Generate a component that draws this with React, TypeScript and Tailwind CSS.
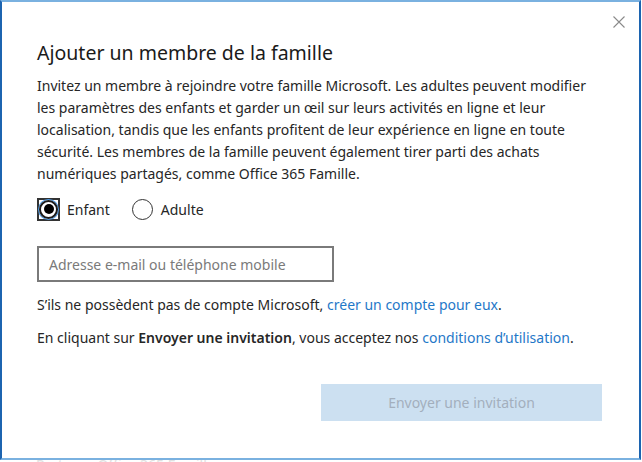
export default function App() {
  return (
    <div
      className="w-[642px] h-[462px] bg-white overflow-hidden relative"
      style={{ fontFamily: '"Noto Sans", "Open Sans", sans-serif' }}
    >
      <div className="w-[641px] h-[460px] border-t-2 border-b-2 border-l-2 border-r-2 border-t-[#7ab1e0] border-b-[#7ab1e0] border-l-[#1c64b0] border-r-[#1c64b0] relative flex flex-col">
        {/* Close */}
        <button className="absolute right-[13px] top-[13px] w-[14px] h-[14px] text-[#8a8a8a]">
          <svg viewBox="0 0 14 14" width="14" height="14" fill="none" stroke="currentColor" strokeWidth="1.1">
            <path d="M1.5 1.5L12.5 12.5M12.5 1.5L1.5 12.5" />
          </svg>
        </button>

        <div className="pl-[35px] pr-[30px] pt-[37px] flex flex-col">
          <h1 className="text-[19.5px] leading-[28px] text-[#1a1a1a] font-normal">
            Ajouter un membre de la famille
          </h1>
          <p className="mt-[8px] text-[14px] leading-[22px] text-[#262626] w-[570px]">
            Invitez un membre à rejoindre votre famille Microsoft. Les adultes peuvent modifier les paramètres des
            enfants et garder un œil sur leurs activités en ligne et leur localisation, tandis que les enfants profitent
            de leur expérience en ligne en toute sécurité. Les membres de la famille peuvent également tirer parti des
            achats numériques partagés, comme Office 365 Famille.
          </p>

          {/* Radios */}
          <div className="mt-[12px] flex items-center h-[24px] text-[14px] text-[#262626]">
            <label className="flex items-center">
              <span className="w-[23px] h-[23px] border-2 border-[#333] flex items-center justify-center">
                <span className="w-[19px] h-[19px] rounded-full border-2 border-[#1b1b1b] flex items-center justify-center ring-1 ring-[#4d9be6]">
                  <span className="w-[10px] h-[10px] rounded-full bg-black" />
                </span>
              </span>
              <span className="ml-[7px]">Enfant</span>
            </label>
            <label className="flex items-center ml-[22px]">
              <span className="w-[21px] h-[21px] rounded-full border-[1.5px] border-[#333]" />
              <span className="ml-[8px]">Adulte</span>
            </label>
          </div>

          {/* Input */}
          <div className="mt-[25px] w-[297px] h-[36px] border-2 border-[#7a7a7a] flex items-center px-[10px]">
            <span className="text-[14px] text-[#7a7a7a]">Adresse e-mail ou téléphone mobile</span>
          </div>

          <p className="mt-[12px] text-[14px] leading-[22px] text-[#262626]">
            S’ils ne possèdent pas de compte Microsoft,{' '}
            <span className="text-[#1f78c8]">créer un compte pour eux</span>.
          </p>
          <p className="mt-[11px] text-[14px] leading-[22px] text-[#262626]">
            En cliquant sur <span className="font-semibold">Envoyer une invitation</span>, vous acceptez nos{' '}
            <span className="text-[#1f78c8]">conditions d’utilisation</span>.
          </p>

          <div className="mt-[35px] flex">
            <button className="ml-[284px] w-[281px] h-[37px] bg-[#cce0f1] text-[14px] text-[#a3afbd]">
              Envoyer une invitation
            </button>
          </div>
        </div>
      </div>
      <div className="pl-[36px] text-[14px] leading-[14px] text-[#e0e0e0] -mt-[2px]">Partagez Office 365 Famille</div>
    </div>
  );
}
